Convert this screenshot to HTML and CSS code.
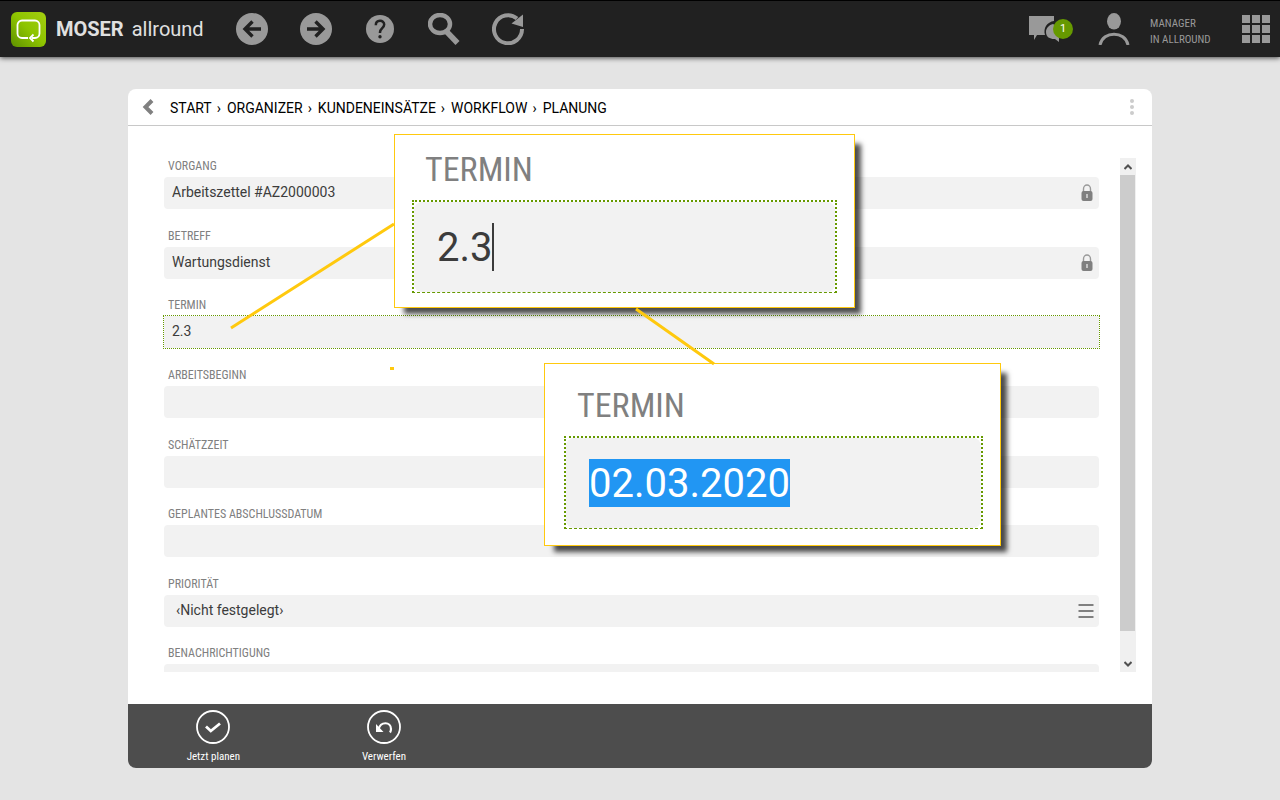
FILE: index.html
```
<!DOCTYPE html>
<html lang="de">
<head>
  <meta charset="UTF-8" />
  <title>MOSER allround</title>
  <link rel="stylesheet" href="styles.css">
</head>
<body>

  <header class="topbar">
    <svg class="logo" viewBox="0 0 35 35">
      <defs>
        <linearGradient id="logoFill" x1="1" y1="0" x2="0" y2="1">
          <stop offset="0" stop-color="#a4cf10" />
          <stop offset="0.5" stop-color="#8dc400" />
          <stop offset="1" stop-color="#5d8f00" />
        </linearGradient>
      </defs>
      <rect width="35" height="35" rx="6" fill="url(#logoFill)" />
      <path d="M17 26h-6a4.500 4.500 0 0 1-4.500-4.500v-8.500a4.500 4.500 0 0 1 4.500-4.500h13a4.500 4.500 0 0 1 4.500 4.500v8.500a4.500 4.500 0 0 1-4.500 4.500h-3" fill="none" stroke="#fff" stroke-width="1.800" />
      <path d="M22.500 22.500l-3.500 3.500 3.500 3.500" fill="none" stroke="#fff" stroke-width="1.800" />
    </svg>
    <div class="brand"><b>MOSER</b> <span>allround</span></div>
    <nav class="tools">
      <button class="tool" aria-label="Zurück">
        <svg viewBox="0 0 32 32"><circle cx="16" cy="16" r="16" fill="#999" /><path d="M25 16H9M16.500 8.500L9 16l7.500 7.500" fill="none" stroke="#212121" stroke-width="3.400" /></svg>
      </button>
      <button class="tool" aria-label="Vor">
        <svg viewBox="0 0 32 32"><circle cx="16" cy="16" r="16" fill="#999" /><path d="M7 16h16M15.500 8.500L23 16l-7.500 7.500" fill="none" stroke="#212121" stroke-width="3.400" /></svg>
      </button>
      <button class="tool" aria-label="Hilfe">
        <svg viewBox="0 0 32 32"><circle cx="16" cy="16" r="14" fill="#999" /><path d="M11.800 12.200c0-5.800 8.400-5.800 8.400-.6 0 3.400-4.200 3.600-4.200 7.600v.8" fill="none" stroke="#212121" stroke-width="2.500" /><circle cx="16" cy="23.700" r="1.700" fill="#212121" /></svg>
      </button>
      <button class="tool" aria-label="Suchen">
        <svg viewBox="0 0 32 32"><ellipse cx="12" cy="11" rx="10" ry="9" fill="none" stroke="#999" stroke-width="4.500" /><path d="M18 18L29.500 30" stroke="#999" stroke-width="5.600" /></svg>
      </button>
      <button class="tool" aria-label="Aktualisieren">
        <svg viewBox="0 0 32 32"><path d="M30 16A14 14 0 1 1 25 5.500" fill="none" stroke="#999" stroke-width="4" /><path d="M31 1.500v12.500l-11.500-3.500z" fill="#999" /></svg>
      </button>
    </nav>
    <button class="chat" aria-label="Nachrichten">
      <svg viewBox="0 0 34 28">
        <path d="M0 1h25v5c-7 1-11 7-9 14h-8l-3 5v-5H0z" fill="#999" />
        <path d="M24 9c-4 1-7 4-7 8 0 5 4 7 8 7h1l4 3v-5c3-2 4-4 4-7z" fill="#999" />
      </svg>
      <span class="badge">1</span>
    </button>
    <button class="user" aria-label="Benutzer">
      <svg viewBox="0 0 32 32"><ellipse cx="16" cy="8.300" rx="7" ry="8.300" fill="#999" /><path d="M2 32c3-14.500 25-14.500 28 0" fill="none" stroke="#999" stroke-width="3" /></svg>
    </button>
    <div class="user-name">MANAGER<br>IN ALLROUND</div>
    <button class="apps" aria-label="Anwendungen">
      <i></i><i></i><i></i><i></i><i></i><i></i><i></i><i></i><i></i>
    </button>
  </header>

  <main class="panel">
    <div class="crumbs">
      <button class="back" aria-label="Zurück">
        <svg viewBox="0 0 12 16"><path d="M10 1.500L3.500 8l6.500 6.500" fill="none" stroke="#808080" stroke-width="4" /></svg>
      </button>
      <nav class="path">
        <a href="#">START</a><span>›</span><a href="#">ORGANIZER</a><span>›</span><a href="#">KUNDENEINSÄTZE</a><span>›</span><a href="#">WORKFLOW</a><span>›</span><a href="#">PLANUNG</a>
      </nav>
      <button class="more" aria-label="Mehr"><i></i><i></i><i></i></button>
    </div>

    <div class="content">
      <div class="viewport">
        <form class="fields">
          <div class="field">
            <label for="vorgang">VORGANG</label>
            <div class="box">
              <input id="vorgang" type="text" value="Arbeitszettel #AZ2000003" readonly>
              <svg class="lock" viewBox="0 0 12 18"><path d="M2.500 8V5a3.500 4 0 0 1 7 0v3" fill="none" stroke="#999" stroke-width="1.400" /><rect x="0.500" y="7" width="11" height="10" rx="2" fill="#808080" /><path d="M6 10v4" stroke="#ddd" stroke-width="1.500" /></svg>
            </div>
          </div>
          <div class="field">
            <label for="betreff">BETREFF</label>
            <div class="box">
              <input id="betreff" type="text" value="Wartungsdienst" readonly>
              <svg class="lock" viewBox="0 0 12 18"><path d="M2.500 8V5a3.500 4 0 0 1 7 0v3" fill="none" stroke="#999" stroke-width="1.400" /><rect x="0.500" y="7" width="11" height="10" rx="2" fill="#808080" /><path d="M6 10v4" stroke="#ddd" stroke-width="1.500" /></svg>
            </div>
          </div>
          <div class="field">
            <label for="termin">TERMIN</label>
            <div class="box active"><input id="termin" type="text" value="2.3"></div>
          </div>
          <div class="field">
            <label for="beginn">ARBEITSBEGINN</label>
            <div class="box"><input id="beginn" type="text"></div>
          </div>
          <div class="field">
            <label for="zeit">SCHÄTZZEIT</label>
            <div class="box"><input id="zeit" type="text"></div>
          </div>
          <div class="field">
            <label for="abschluss">GEPLANTES ABSCHLUSSDATUM</label>
            <div class="box"><input id="abschluss" type="text"></div>
          </div>
          <div class="field">
            <label for="prio">PRIORITÄT</label>
            <div class="box">
              <select id="prio"><option>‹Nicht festgelegt›</option></select>
              <svg class="list-icon" viewBox="0 0 16 16"><path d="M0.500 2h15M0.500 8h15M0.500 14h15" stroke="#808080" stroke-width="2" /></svg>
            </div>
          </div>
          <div class="field">
            <label for="info">BENACHRICHTIGUNG</label>
            <div class="box"><input id="info" type="text"></div>
          </div>
        </form>
      </div>
      <div class="scrollbar">
        <button class="arrow" aria-label="Nach oben"><svg viewBox="0 0 8 6"><path d="M0.500 5L4 1.500 7.500 5" fill="none" stroke="#505050" stroke-width="2" /></svg></button>
        <div class="track"><div class="thumb"></div></div>
        <button class="arrow" aria-label="Nach unten"><svg viewBox="0 0 8 6"><path d="M0.500 1L4 4.500 7.500 1" fill="none" stroke="#505050" stroke-width="2" /></svg></button>
      </div>
    </div>

    <footer class="actions">
      <button class="action">
        <svg viewBox="0 0 34 34"><circle cx="17" cy="17" r="16" fill="none" stroke="#fff" stroke-width="1.800" /><path d="M10 16.500l4.800 4.500 9.200-7.500" fill="none" stroke="#fff" stroke-width="2.800" /></svg>
        <span>Jetzt planen</span>
      </button>
      <button class="action">
        <svg viewBox="0 0 34 34"><circle cx="17" cy="17" r="16" fill="none" stroke="#fff" stroke-width="1.800" /><path d="M11.500 19.500c2-8.500 12.500-8 12.500-.5 0 1.500-.3 2.500-1 3.500" fill="none" stroke="#fff" stroke-width="2.200" /><path d="M9 14v8h7.500z" fill="#fff" /></svg>
        <span>Verwerfen</span>
      </button>
    </footer>

    <!-- enlarged views of the date field -->
    <div class="callout callout-typed">
      <label for="zoomTyped">TERMIN</label>
      <div class="zoom-box"><div class="zoom-inner">
        <input id="zoomTyped" class="typed" type="text" value="2.3"><span class="caret"></span>
      </div></div>
    </div>
    <div class="callout callout-result">
      <label for="zoomResult">TERMIN</label>
      <div class="zoom-box"><div class="zoom-inner">
        <input id="zoomResult" class="selected" type="text" value="02.03.2020">
      </div></div>
    </div>
    <svg class="connectors">
      <path d="M103 239L266 135M508 220L586 275" stroke="#ffc90e" stroke-width="3" />
      <path d="M262 279.500h4" stroke="#ffc90e" stroke-width="3" />
    </svg>
  </main>

</body>
</html>
```
FILE: styles.css
```
* {
  box-sizing: border-box;
}
body {
  margin: 0;
  height: 100vh;
  display: flex;
  flex-direction: column;
  background: #e4e4e4;
  font-family: Roboto, sans-serif;
  font-size: 14px;
  color: #3c3c3c;
}
button {
  border: none;
  padding: 0;
  background: none;
  font: inherit;
  color: inherit;
  cursor: pointer;
}
svg {
  display: block;
}
input, select {
  border: none;
  outline: none;
  background: none;
  font: inherit;
  color: inherit;
}

/* top bar */
.topbar {
  display: flex;
  align-items: center;
  height: 57px;
  padding: 0 10px 0 11px;
  border-top: 1px solid #000;
  background: #212121;
  box-shadow: 0 1px 5px rgba(0, 0, 0, 0.7);
  color: #999;
}
.logo {
  width: 35px;
  height: 35px;
}
.brand {
  display: flex;
  gap: 8px;
  width: 180px;
  margin-left: 10px;
  font-size: 20px;
  color: #e0e0e0;
}
.tools {
  display: flex;
  gap: 32px;
}
.tool svg,
.user svg {
  width: 32px;
  height: 32px;
}
.chat {
  position: relative;
  margin-left: auto;
}
.chat svg {
  width: 34px;
  height: 28px;
}
.badge {
  position: absolute;
  top: 4px;
  right: -10px;
  width: 20px;
  height: 20px;
  border-radius: 50%;
  background: #690;
  color: #fff;
  font-size: 11px;
  line-height: 20px;
}
.user {
  margin-left: 35px;
}
.user-name {
  width: 92px;
  margin-left: 20px;
  font-family: "Roboto Condensed", "Liberation Sans Narrow", Roboto, sans-serif;
  font-size: 11px;
  line-height: 16px;
  padding-top: 5px;
}
.apps {
  display: grid;
  grid-template-columns: repeat(3, 8px);
  justify-content: space-between;
  align-content: space-between;
  width: 28px;
  height: 28px;
}
.apps i {
  height: 8px;
  background: #999;
}

/* panel */
.panel {
  position: relative;
  flex: 1;
  min-height: 0;
  display: flex;
  flex-direction: column;
  margin: 32px 10%;
  border-radius: 8px;
  background: #fff;
}
.crumbs {
  display: flex;
  align-items: center;
  height: 37px;
  padding: 0 16px 0 14px;
  border-bottom: 1px solid #c8c8c8;
}
.back svg {
  width: 12px;
  height: 16px;
}
.path {
  display: flex;
  gap: 5px;
  margin-left: 16px;
  padding-top: 2px;
}
.path a,
.path span {
  color: #000;
  text-decoration: none;
}
.path span {
  padding-right: 1px;
}
.more {
  display: flex;
  flex-direction: column;
  gap: 2px;
  margin-left: auto;
  padding: 0 2px;
}
.more i {
  width: 4px;
  height: 4px;
  border-radius: 50%;
  background: #ccc;
}
.content {
  flex: 1;
  min-height: 0;
  display: flex;
  gap: 20px;
  padding: 32px 16px 32px 35px;
}
.viewport {
  flex: 1;
  overflow: hidden;
}
.fields {
  display: grid;
  grid-auto-rows: 1fr;
  height: 557px;
  padding: 0 1px;
}
.field label {
  display: block;
  height: 19px;
  padding-left: 4px;
  line-height: 16px;
  font-size: 12px;
}
.field label,
.callout label {
  font-family: "Roboto Condensed", "Liberation Sans Narrow", Roboto, sans-serif;
  color: #808080;
}
.box {
  display: flex;
  align-items: center;
  height: 32px;
  padding-right: 5px;
  border-radius: 4px;
  background: #f2f2f2;
}
.box input,
.box select {
  flex: 1;
  min-width: 0;
  height: 30px;
  padding: 0 8px 2px;
  appearance: none;
}
.box select {
  padding-left: 12px;
}
.box.active {
  border-radius: 0;
  outline: 1px dotted #690;
}
.lock {
  width: 12px;
  height: 18px;
  margin-right: 1px;
}
.list-icon {
  width: 16px;
  height: 16px;
}

/* scrollbar */
.scrollbar {
  display: flex;
  flex-direction: column;
  width: 16px;
  background: #f0f0f0;
}
.arrow {
  display: flex;
  justify-content: center;
  align-items: center;
  width: 15px;
  height: 17px;
}
.arrow svg {
  width: 8px;
  height: 6px;
}
.track {
  flex: 1;
}
.thumb {
  width: 15px;
  height: 95%;
  background: #ccc;
}

/* bottom actions */
.actions {
  display: grid;
  grid-template-columns: repeat(6, 1fr);
  height: 64px;
  border-radius: 0 0 8px 8px;
  background: #4d4d4d;
}
.action {
  display: flex;
  flex-direction: column;
  align-items: center;
  gap: 6px;
  padding-top: 6px;
  font-family: "Roboto Condensed", "Liberation Sans Narrow", Roboto, sans-serif;
  font-size: 11px;
  line-height: 13px;
  color: #fff;
}
.action svg {
  width: 34px;
  height: 34px;
}

/* callouts */
.callout {
  position: absolute;
  border: 1px solid #ffc90e;
  background: #fff;
  box-shadow: 8px 8px 5px -2px rgba(0, 0, 0, 0.7);
}
.callout label {
  display: block;
  padding-left: 13px;
  font-size: 34px;
  line-height: 40px;
}
.callout-typed {
  top: 45px;
  left: 266px;
  width: 461px;
  padding: 14px 17px;
}
.callout-result {
  top: 274px;
  left: 416px;
  width: 457px;
  padding: 21px 17px 16px 19px;
}
.zoom-box {
  margin-top: 11px;
  border: 2px dotted #690;
  border-bottom: 1px dashed #690;
}
.zoom-inner {
  display: flex;
  align-items: center;
  height: 90px;
  padding-left: 23px;
  border-radius: 8px;
  background: #f2f2f2;
}
.zoom-inner input {
  height: 48px;
  padding: 0;
  font-size: 40px;
}
.typed {
  width: 55px;
}
.caret {
  width: 2px;
  height: 48px;
  background: #3c3c3c;
}
.zoom-inner .selected {
  width: 201px;
  background: #2196f3;
  color: #fff;
}
.connectors {
  position: absolute;
  inset: 0;
  width: 100%;
  height: 100%;
  pointer-events: none;
}
```
